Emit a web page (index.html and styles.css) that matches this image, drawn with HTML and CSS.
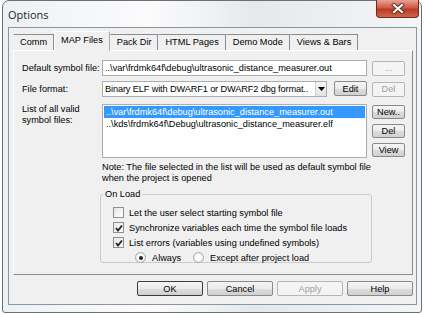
FILE: index.html
```html
<!DOCTYPE html>
<html lang="en">
<head>
    <meta charset="UTF-8">
    <title>Options</title>
    <link rel="stylesheet" href="styles.css">
</head>
<body>
    <div class="window">
        <div class="titlebar">
            <span class="title">Options</span>
            <div class="close">
                <svg width="14" height="11" viewBox="0 0 14 11">
                    <path d="M3 2 L11 9 M11 2 L3 9" stroke="#5a2a22" stroke-width="4" stroke-linecap="square"/>
                    <path d="M3 2 L11 9 M11 2 L3 9" stroke="#fff" stroke-width="2.2" stroke-linecap="square"/>
                </svg>
            </div>
        </div>

        <div class="client">
            <div class="tabs">
                <div class="tab">Comm</div>
                <div class="tab active">MAP Files</div>
                <div class="tab">Pack Dir</div>
                <div class="tab">HTML Pages</div>
                <div class="tab">Demo Mode</div>
                <div class="tab">Views &amp; Bars</div>
            </div>

            <div class="pane">
                <div class="form-grid">
                    <label class="lbl">Default symbol file:</label>
                    <div class="field">..\var\frdmk64f\debug\ultrasonic_distance_measurer.out</div>
                    <button class="btn disabled">...</button>

                    <label class="lbl row2">File format:</label>
                    <div class="combo-row row2">
                        <div class="combo">
                            <span class="combo-text">Binary ELF with DWARF1 or DWARF2 dbg format..</span>
                            <span class="combo-arrow">
                                <svg width="7" height="4" viewBox="0 0 7 4"><path d="M0 0 H7 L3.5 4 Z" fill="#000"/></svg>
                            </span>
                        </div>
                        <button class="btn">Edit</button>
                    </div>
                    <button class="btn disabled row2">Del</button>

                    <label class="lbl lbl-top row3">List of all valid<br>symbol files:</label>
                    <div class="listbox row3">
                        <div class="item selected">..\var\frdmk64f\debug\ultrasonic_distance_measurer.out</div>
                        <div class="item">..\kds\frdmk64f\Debug\ultrasonic_distance_measurer.elf</div>
                    </div>
                    <div class="side-buttons row3">
                        <button class="btn">New..</button>
                        <button class="btn">Del</button>
                        <button class="btn">View</button>
                    </div>

                    <p class="note">Note: The file selected in the list will be used as default symbol file<br>when the project is opened</p>

                    <fieldset class="group">
                        <legend>On Load</legend>
                        <div class="check-row">
                            <span class="checkbox"></span>
                            <span>Let the user select starting symbol file</span>
                        </div>
                        <div class="check-row">
                            <span class="checkbox checked">
                                <svg width="8" height="8" viewBox="0 0 8 8"><path d="M1 4 L3 6.5 L7 1.5" fill="none" stroke="#222" stroke-width="1.8"/></svg>
                            </span>
                            <span>Synchronize variables each time the symbol file loads</span>
                        </div>
                        <div class="check-row">
                            <span class="checkbox checked">
                                <svg width="8" height="8" viewBox="0 0 8 8"><path d="M1 4 L3 6.5 L7 1.5" fill="none" stroke="#222" stroke-width="1.8"/></svg>
                            </span>
                            <span>List errors (variables using undefined symbols)</span>
                        </div>
                        <div class="radio-row">
                            <span class="radio on"></span>
                            <span class="radio-label">Always</span>
                            <span class="radio"></span>
                            <span>Except after project load</span>
                        </div>
                    </fieldset>
                </div>
            </div>

            <div class="buttons">
                <button class="btn big default">OK</button>
                <button class="btn big">Cancel</button>
                <button class="btn big disabled">Apply</button>
                <button class="btn big">Help</button>
            </div>
        </div>
    </div>
</body>
</html>
```

FILE: styles.css
```css
body {
    margin: 0;
    background: #fff;
    font-family: "Liberation Sans", Arial, sans-serif;
    font-size: 9.2px;
    color: #000;
    overflow: hidden;
}
.window {
    margin-left: 2px;
    width: 418px;
    height: 311px;
    border: 1px solid #6b7078;
    border-radius: 7px 7px 3px 3px;
    background: linear-gradient(to right, #eef1f4, #fbfbfc 35%, #e6e9ec 60%, #f3f5f7);
    display: flex;
    flex-direction: column;
}
.titlebar {
    height: 26px;
    display: flex;
    justify-content: space-between;
    align-items: flex-start;
    padding-left: 5px;
}
.title {
    font-family: "Open Sans", "Noto Sans", sans-serif;
    font-size: 11px;
    margin-top: 6px;
    color: #1e1e1e;
}
.close {
    width: 41px;
    height: 17px;
    margin: -1px 2px 0 0;
    border: 1px solid #6e2a1e;
    border-top: none;
    border-radius: 0 0 4px 4px;
    background: linear-gradient(#e8a295, #cf5a44 45%, #b83a24 55%, #d0664e);
    display: flex;
    align-items: center;
    justify-content: center;
}
.client {
    flex: 1;
    margin: 0 4px 7px 5px;
    border: 1px solid #8d949b;
    background: #f0f0f0;
    padding: 3px 3px 0 4px;
    display: flex;
    flex-direction: column;
}

/* tabs */
.tabs {
    display: flex;
    align-items: flex-end;
    height: 20px;
    margin-bottom: -1px;
    position: relative;
    z-index: 1;
}
.tab {
    height: 15px;
    line-height: 15px;
    padding: 0 6px;
    border: 1px solid #8a8d93;
    border-bottom: none;
    border-left-color: #f0f0f0;
    margin-bottom: 1px;
    background: #f0f0f0;
}
.tab.active {
    height: 19px;
    line-height: 16px;
    margin-bottom: 0;
    border-color: #a9abb0;
    border-left-color: #fff;
    border-top-color: #fff;
}
.pane {
    box-sizing: border-box;
    height: 225px;
    border: 1px solid #8a8d93;
    border-top-color: #fff;
    border-left-color: #fff;
    padding: 9px 7px 0 8px;
}

/* form */
.form-grid {
    display: grid;
    grid-template-columns: 75px minmax(0, 1fr) 33px;
    column-gap: 5px;
    align-items: center;
}
.lbl {
    white-space: nowrap;
}
.lbl-top {
    align-self: start;
    line-height: 11px;
    margin-top: 1px;
}
.row2 {
    margin-top: 5px;
}
.row3 {
    margin-top: 7px;
}
.field {
    height: 14px;
    line-height: 14px;
    border: 1px solid #abadb3;
    background: #fff;
    padding: 0 2px;
    white-space: nowrap;
    overflow: hidden;
}
.combo-row {
    display: flex;
    gap: 7px;
}
.combo-row .btn {
    width: 33px;
}
.combo {
    flex: 1;
    display: flex;
    height: 14px;
    border: 1px solid #abadb3;
    background: #fff;
    min-width: 0;
}
.combo-text {
    flex: 1;
    line-height: 14px;
    padding-left: 2px;
    letter-spacing: -0.12px;
    white-space: nowrap;
    overflow: hidden;
}
.combo-arrow {
    width: 10px;
    border-left: 1px solid #ccc;
    background: linear-gradient(#f6f6f6, #e2e2e2);
    display: flex;
    align-items: center;
    justify-content: center;
}
.listbox {
    align-self: start;
    height: 50px;
    border: 1px solid #abadb3;
    background: #fff;
    padding: 1px;
}
.item {
    height: 12px;
    line-height: 12px;
    padding-left: 2px;
    white-space: nowrap;
    overflow: hidden;
}
.item.selected {
    background: #3399ff;
    color: #fff;
}
.side-buttons {
    align-self: start;
    display: flex;
    flex-direction: column;
    gap: 5px;
    margin-top: 8px;
}
.note {
    grid-column: 2 / 4;
    margin: 4px 0 0;
    line-height: 11px;
    white-space: nowrap;
}

/* buttons */
.btn {
    font: inherit;
    color: #000;
    height: 15px;
    padding: 0;
    border: 1px solid #8a8a8a;
    border-radius: 2px;
    background: linear-gradient(#f4f4f4, #ebebeb 50%, #dddddd 51%, #d0d0d0);
    line-height: 12px;
}
.btn.disabled {
    color: #a0a0a0;
    border-color: #b5b5b5;
    background: #f4f4f4;
}
.side-buttons .btn {
    height: 14px;
}

/* group box */
.group {
    grid-column: 2 / 4;
    margin: 5px 33px 0 -2px;
    padding: 5px 8px 0 12px;
    height: 67px;
    border: 1px solid #c8cbcf;
    border-radius: 3px;
    min-width: 0;
}
.group legend {
    padding: 0 2px;
    margin-left: -10px;
    line-height: 11px;
}
.check-row,
.radio-row {
    height: 15px;
    display: flex;
    align-items: center;
    gap: 5px;
    white-space: nowrap;
}
.checkbox {
    width: 9px;
    height: 9px;
    border: 1px solid #8f8f8f;
    background: linear-gradient(135deg, #e6e6e6, #fff);
    display: flex;
    align-items: center;
    justify-content: center;
}
.radio-row {
    padding-left: 22px;
    gap: 6px;
}
.radio {
    width: 9px;
    height: 9px;
    border: 1px solid #a9a9a9;
    border-radius: 50%;
    background: radial-gradient(circle, #fff 40%, #e0e0e0);
    position: relative;
}
.radio.on::after {
    content: "";
    position: absolute;
    left: 2.5px;
    top: 2.5px;
    width: 4px;
    height: 4px;
    border-radius: 50%;
    background: #222;
}
.radio-label {
    margin-right: 6px;
}

/* bottom buttons */
.buttons {
    display: flex;
    justify-content: flex-end;
    gap: 4px;
    margin-top: 6px;
}
.btn.big {
    width: 66px;
}
.btn.default {
    border-color: #3c3c3c;
}
```
